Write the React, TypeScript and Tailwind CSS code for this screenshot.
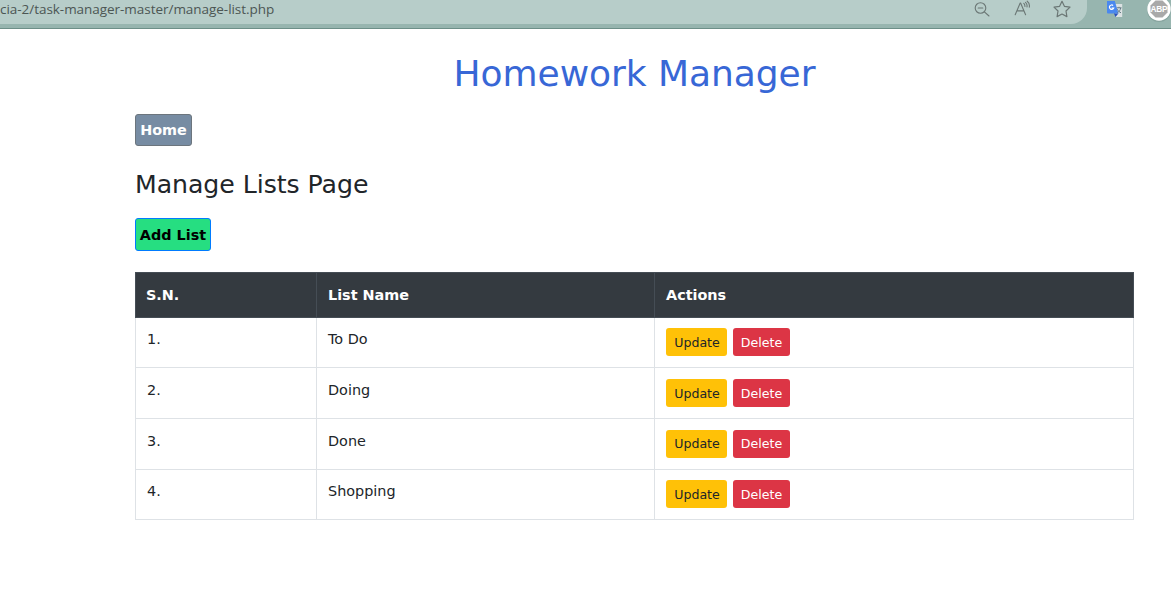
import React from 'react';

const lists = [
  { name: 'To Do', height: 'h-[50px]', pad: 'pt-[10px]', label: 'pt-px' },
  { name: 'Doing', height: 'h-[51px]', pad: 'pt-[11px]', label: 'pt-px' },
  { name: 'Done', height: 'h-[51px]', pad: 'pt-[11px]', label: 'pt-0' },
  { name: 'Shopping', height: 'h-[50px]', pad: 'pt-[10px]', label: 'pt-px' },
];

function BrowserBar() {
  return (
    <header className="flex h-[29px] items-start overflow-hidden border-b border-[#6d8f88] bg-[#97b5af]">
      <div className="flex h-6 w-[1087px] shrink-0 items-start rounded-br-[16px] bg-[#b7cdc9]">
        <span className="w-[974px] whitespace-nowrap font-['Open_Sans',sans-serif] text-[13.5px] leading-[19px] tracking-[-0.04px] text-[#4c5654]">
          cia-2/task-manager-master/manage-list.php
        </span>
        <svg className="h-5 w-[17px]" viewBox="0 0 17 20" fill="none" stroke="#6b7775" strokeWidth="1.1" strokeLinecap="round">
          <circle cx="6.5" cy="8" r="5.3" />
          <path d="M10.4 11.8 15 16M4.2 8h4.6" />
        </svg>
        <svg className="ml-[23px] h-5 w-[18px]" viewBox="0 0 18 20" fill="none" stroke="#6b7775" strokeWidth="1.1" strokeLinecap="round" strokeLinejoin="round">
          <path d="M1.2 14.8 6.2 3h.4l5 11.8M3 10.9h7M9.8 3.4c.9.8 1.2 1.8 1.1 3M11.5 2.3c1.3 1.1 1.8 2.7 1.5 4.6M13.2 1.2c1.9 1.5 2.6 3.5 2.1 6" />
        </svg>
        <svg className="ml-[21px] h-5 w-[18px]" viewBox="0 0 18 20" fill="none" stroke="#6b7775" strokeWidth="1.2" strokeLinejoin="round">
          <path d="m9 1.3 2.4 5 5.6.8-4 3.9.9 5.6L9 14l-4.9 2.6.9-5.6-4-3.9 5.6-.8z" />
        </svg>
      </div>
      <svg className="ml-[19px] h-5 w-[18px] shrink-0" viewBox="0 0 18 20">
        <path d="M7 4h9.2v13H10z" fill="#dce2e3" />
        <path d="M1 1h7.8l3.7 12.5H2a1 1 0 0 1-1-1z" fill="#4a88ef" />
        <path d="M8 13.5h4.4L9.5 17z" fill="#2850bd" />
        <path d="M10.8 7.8h4.7M13 6.8v1M14.7 8c-.4 2-1.5 3.7-3.3 4.7M11.4 9.2c.8 1.7 2 2.9 3.6 3.6" fill="none" stroke="#667b84" />
        <path d="M7.1 5.5A2.2 2.2 0 1 0 7.7 8H5.6" fill="none" stroke="#fff" strokeWidth="1.2" />
      </svg>
      <svg className="ml-[22px] h-6 w-[25px] shrink-0" viewBox="0 0 25 24">
        <circle cx="13" cy="10" r="12" fill="#708c86" opacity=".4" />
        <circle cx="13" cy="9" r="11.7" fill="#fff" />
        <path d="M9.5.5h7L21.5 5.5v7L16.5 17.5h-7L4.5 12.5v-7z" fill="#a9a9a9" />
        <text x="13" y="12.2" textAnchor="middle" fontFamily="Liberation Sans, sans-serif" fontSize="8.3" fontWeight="700" letterSpacing="-0.2" fill="#fff">ABP</text>
      </svg>
    </header>
  );
}

export default function App() {
  return (
    <div className="min-h-[595px] bg-white font-['DejaVu_Sans',sans-serif] text-[#212529]">
      <BrowserBar />
      <main className="ml-[135px] flex w-[999px] flex-col items-start">
        <h1 className="mt-[23px] h-[42px] w-full text-center text-[36px] leading-[43px] tracking-[-0.05px] text-[#3867d6]">Homework Manager</h1>
        <a className="mt-5 flex h-8 w-[57px] items-center justify-center whitespace-nowrap rounded-[3px] border border-[#6c757d] bg-[#778ca3] pt-[2px] text-[14.4px] font-bold text-white">Home</a>
        <h3 className="mt-[23px] h-[30px] whitespace-nowrap text-[25.2px] leading-[31px] tracking-[-0.05px]">Manage Lists Page</h3>
        <a className="mt-[19px] flex h-[33px] w-[76px] items-center justify-center whitespace-nowrap rounded-[3px] border border-[#007bff] bg-[#26de81] pt-[2px] text-[14.4px] font-bold text-black">Add List</a>
        <table className="mt-[21px] w-[999px] table-fixed border-separate border-spacing-0 text-left text-[14.4px] leading-[22px]">
          <colgroup>
            <col className="w-[182px]" />
            <col className="w-[338px]" />
            <col className="w-[479px]" />
          </colgroup>
          <thead>
            <tr className="h-[46px] bg-[#343a40] text-white">
              <th className="border border-[#454d55] pl-[10px]">S.N.</th>
              <th className="border-y border-r border-[#454d55] pl-[11px]">List Name</th>
              <th className="border-y border-r border-[#454d55] pl-[11px]">Actions</th>
            </tr>
          </thead>
          <tbody>
            {lists.map((list, i) => (
              <tr key={list.name} className={list.height}>
                <td className={`border-x border-b border-[#dee2e6] pl-[11px] align-top ${list.pad}`}>{i + 1}.</td>
                <td className={`border-r border-b border-[#dee2e6] pl-[11px] align-top ${list.pad}`}>{list.name}</td>
                <td className={`border-r border-b border-[#dee2e6] pl-[11px] align-top ${list.pad}`}>
                  <div className="flex gap-[6px] text-[12.6px]">
                    <button className={`h-7 w-[61px] rounded-[3px] bg-[#ffc107] pl-px text-[#212529] ${list.label}`}>Update</button>
                    <button className={`h-7 w-[57px] rounded-[3px] bg-[#dc3545] text-white ${list.label}`}>Delete</button>
                  </div>
                </td>
              </tr>
            ))}
          </tbody>
        </table>
      </main>
    </div>
  );
}
